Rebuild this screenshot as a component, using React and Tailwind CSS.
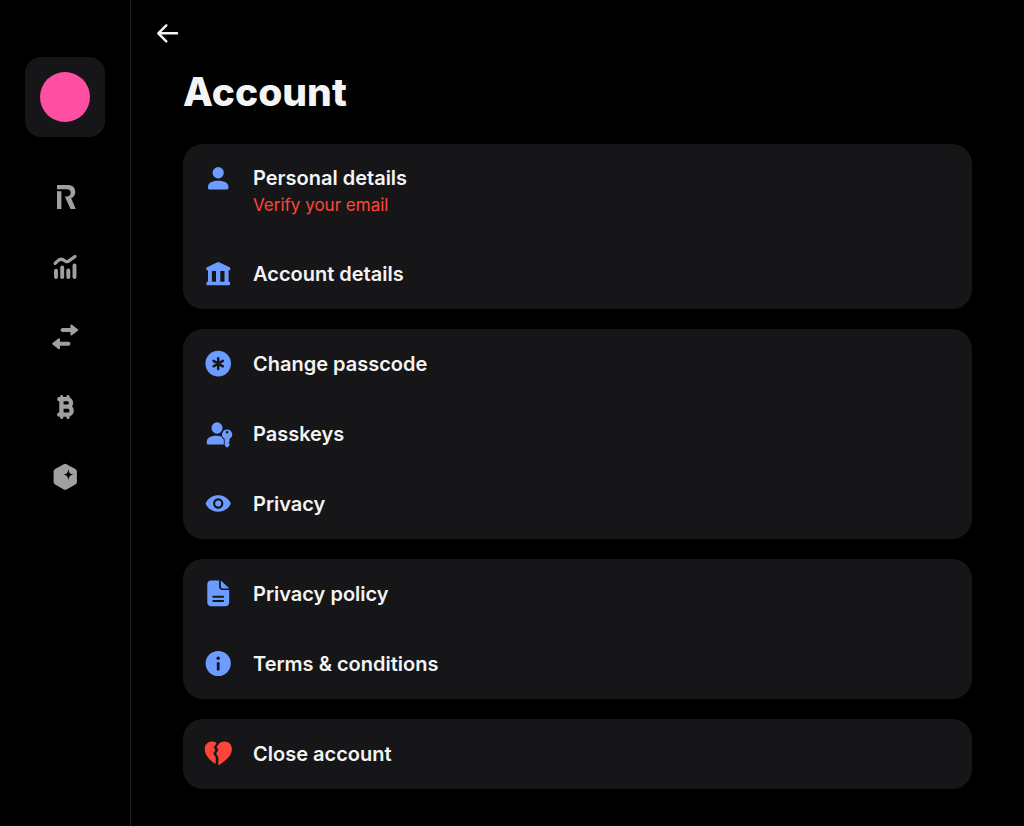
import React from "react";

const RetailIcon = () => (
  <svg viewBox="0 0 30 30" className="h-[30px] w-[30px]" fill="currentColor" aria-hidden="true">
    <path d="M7 9.200h4.400V27H7z" />
    <path d="M7 3h10.600c4.600 0 7.700 2.700 7.700 6.900 0 3-1.500 5.200-4.200 6.200l4.700 10.900h-5.300l-5.700-12.600h2.400c2.200 0 3.400-1.400 3.400-3.600s-1.300-3.500-3.600-3.500H7z" />
  </svg>
);

const InvestIcon = () => (
  <svg viewBox="0 0 30 30" className="h-[30px] w-[30px]" fill="none" stroke="currentColor" strokeLinecap="round" strokeLinejoin="round" aria-hidden="true">
    <path strokeWidth="3.900" d="M6 18.800v6.200M12.200 15.500v9.500M18.300 18.500v6.500M24.500 13.500v11.500" />
    <path strokeWidth="3.300" d="M5.200 11.300l3.200-2.900c1.500-1.400 3.300-1.500 4.900-.5l2 1.200c1.300.8 2.900.6 4-.4L25 4.500" />
  </svg>
);

const TransferIcon = () => (
  <svg viewBox="0 0 30 30" className="h-[30px] w-[30px]" fill="currentColor" stroke="currentColor" strokeLinecap="round" strokeLinejoin="round" aria-hidden="true">
    <path strokeWidth="4" d="M12.600 8H21M18.400 21.700H9" />
    <path strokeWidth="2" d="M21.400 3.500L27.200 8l-5.800 4.500zM9 17.200L3.200 21.700 9 26.200z" />
  </svg>
);

const CryptoIcon = () => (
  <svg viewBox="0 0 30 30" className="h-[30px] w-[30px]" fill="none" stroke="currentColor" strokeLinecap="round" strokeLinejoin="round" aria-hidden="true">
    <path strokeWidth="4.300" d="M9.200 7.200h8.100a3.600 3.600 0 0 1 0 7.500H11.800h5.900a4 4 0 0 1 0 8H9.200M11.400 7.200v15.500" />
    <path strokeWidth="3.200" d="M11.700 4.500v3M18 4.500v3M11.700 22.500v3M18 22.500v3" />
  </svg>
);

const HubIcon = () => (
  <svg viewBox="0 0 30 30" className="h-[30px] w-[30px]" fill="currentColor" aria-hidden="true">
    <path d="M13.700 2.200a3 3 0 0 1 2.900 0l8.700 4.700a3 3 0 0 1 1.600 2.700v10.300a3 3 0 0 1-1.600 2.700l-8.700 4.800a3 3 0 0 1-2.900 0l-8.500-4.800A3 3 0 0 1 3.600 19.900V9.600a3 3 0 0 1 1.600-2.700z" />
    <path className="fill-black" d="M18.400 6.900c.7 4.200 1.500 5 5.700 5.700-4.200.7-5 1.500-5.700 5.700-.7-4.200-1.500-5-5.700-5.700 4.200-.7 5-1.500 5.700-5.700z" />
  </svg>
);

const PersonIcon = () => (
  <svg viewBox="0 0 30 30" className="h-[30px] w-[30px]" fill="currentColor" aria-hidden="true">
    <ellipse cx="15.200" cy="8.800" rx="5.600" ry="5.700" />
    <path d="M5 22.700c0-3.700 3.800-6 10.200-6s10.200 2.300 10.200 6v1.400c0 .8-.5 1.300-1.300 1.300H6.300C5.500 25.400 5 24.900 5 24.100z" />
  </svg>
);

const BankIcon = () => (
  <svg viewBox="0 0 30 30" className="h-[30px] w-[30px]" fill="currentColor" aria-hidden="true">
    <path d="M14.400 3.300a1.800 1.800 0 0 1 1.700 0l10.500 5c.5.300.7.600.7 1.100v1c0 .5-.3.800-.8.800h-.9v11.500h.6c.5 0 .8.300.8.800v2c0 .5-.3.800-.8.800H4.300c-.5 0-.8-.3-.8-.8v-2c0-.5.300-.8.800-.8H5V11.200h-.9c-.5 0-.8-.3-.8-.8v-1c0-.5.200-.8.700-1.100zM8.900 11.900v10.800h4.100V11.900zM17.300 11.900v10.800h4.200V11.900z" />
  </svg>
);

const PasscodeIcon = () => (
  <svg viewBox="0 0 30 30" className="h-[30px] w-[30px]" aria-hidden="true">
    <circle cx="15.200" cy="14.600" r="12.800" fill="currentColor" />
    <path className="stroke-[#161618]" strokeWidth="2.500" strokeLinecap="round" d="M15.200 9.200v10.800M10.500 11.900l9.400 5.400M10.500 17.300l9.400-5.400" />
  </svg>
);

const PasskeyIcon = () => (
  <svg viewBox="0 0 30 30" className="h-[30px] w-[30px]" fill="currentColor" aria-hidden="true">
    <ellipse cx="14" cy="9" rx="5.500" ry="5.700" />
    <path d="M3.800 22.600c0-3.600 3.600-5.800 9.500-5.800 2 0 3.700.3 5.100.8.500 1.300 1.300 2.300 2.400 3v4.800H5c-.8 0-1.200-.5-1.200-1.200z" />
    <path fillRule="evenodd" d="M24.100 10.500a5.100 5.100 0 0 0-2.400 9.600v6.300l2.400 2.300 2.400-2.200v-1.800l-1-1 1-1.100v-2.500a5.100 5.100 0 0 0-2.400-9.600zm0 1.500a1.300 1.300 0 1 1 0 2.600 1.300 1.300 0 0 1 0-2.600z" />
  </svg>
);

const EyeIcon = () => (
  <svg viewBox="0 0 30 30" className="h-[30px] w-[30px]" fill="currentColor" aria-hidden="true">
    <path d="M15.200 6.200c5.300 0 9.700 2.700 12.200 7.300.4.700.4 1.300 0 2-2.500 4.600-6.900 7.300-12.200 7.300S5.500 20.100 3 15.500c-.4-.7-.4-1.300 0-2 2.500-4.600 6.900-7.300 12.200-7.300z" />
    <circle cx="15.200" cy="14.500" r="4.100" className="stroke-[#161618]" strokeWidth="2.200" />
  </svg>
);

const DocumentIcon = () => (
  <svg viewBox="0 0 30 30" className="h-[30px] w-[30px]" fill="currentColor" aria-hidden="true">
    <path d="M8.300 1.500h7.700v6c0 2.300 1.300 3.500 3.500 3.500h6.700v12.200c0 2.600-1.400 4-4 4H8.300c-2.600 0-4-1.400-4-4V5.500c0-2.600 1.400-4 4-4z" />
    <path d="M17.800 1.700c.5.100.8.400 1.100.7l6.400 6c.3.300.6.600.7 1h-6c-1.500 0-2.200-.7-2.200-2.100z" />
    <path className="stroke-[#161618]" strokeWidth="1.900" strokeLinecap="round" d="M10.200 17.700h10M10.200 22h10" />
  </svg>
);

const InfoIcon = () => (
  <svg viewBox="0 0 30 30" className="h-[30px] w-[30px]" aria-hidden="true">
    <circle cx="15.200" cy="14.500" r="12.600" fill="currentColor" />
    <circle cx="15.200" cy="9.200" r="1.700" className="fill-[#161618]" />
    <path className="stroke-[#161618]" strokeWidth="2.800" strokeLinecap="round" d="M15.200 14.300v6" />
  </svg>
);

const BrokenHeartIcon = () => (
  <svg viewBox="0 0 30 30" className="h-[30px] w-[30px]" fill="currentColor" aria-hidden="true">
    <path d="M13.600 4.200C12.400 3 11 2.400 9.200 2.400c-4.400 0-7.500 3.200-7.500 7.600 0 5.700 4.700 10.900 10.900 15.100l.3-6.400-2.600-4.200 2-3.300-1.500-3z" />
    <path d="M15.900 4.700c1.500-1.500 3.400-2.300 5.600-2.300 4.400 0 7.400 3.200 7.400 7.600 0 6.200-5.500 11.500-13.600 16.400l.1-8-2.300-3.900 2.300-3.400-1.800-3z" />
  </svg>
);

const BackIcon = () => (
  <svg viewBox="0 0 30 30" className="h-[30px] w-[30px]" fill="none" stroke="currentColor" strokeWidth="2.500" strokeLinecap="round" strokeLinejoin="round" aria-hidden="true">
    <path d="M25 15.300H6.500M14.300 7.300l-8 8 8 8" />
  </svg>
);

const navItems = [
  { label: "Home", icon: RetailIcon },
  { label: "Invest", icon: InvestIcon },
  { label: "Payments", icon: TransferIcon },
  { label: "Crypto", icon: CryptoIcon },
  { label: "Hub", icon: HubIcon },
];

const sections = [
  [
    { label: "Personal details", note: "Verify your email", icon: PersonIcon },
    { label: "Account details", icon: BankIcon },
  ],
  [
    { label: "Change passcode", icon: PasscodeIcon },
    { label: "Passkeys", icon: PasskeyIcon },
    { label: "Privacy", icon: EyeIcon },
  ],
  [
    { label: "Privacy policy", icon: DocumentIcon },
    { label: "Terms & conditions", icon: InfoIcon },
  ],
  [{ label: "Close account", icon: BrokenHeartIcon, danger: true }],
];

const Sidebar = () => {
  return (
    <aside className="flex w-[131px] shrink-0 flex-col items-center border-r border-[#212123] pt-[57px]">
      <button aria-label="Profile" className="flex h-20 w-20 items-center justify-center rounded-2xl bg-[#161618]">
        <span className="h-[50px] w-[50px] rounded-full bg-[#ff4fa3]"></span>
      </button>
      <nav className="mt-[25px] flex flex-col">
        {navItems.map((item) => (
          <a key={item.label} href="#" aria-label={item.label} className="flex h-[70px] w-20 items-center justify-center text-[#a0a0a2]">
            <item.icon />
          </a>
        ))}
      </nav>
    </aside>
  );
};

const Row = ({ item }) => {
  return (
    <a href="#" className={item.note ? "flex items-start gap-5 p-5" : "flex items-center gap-5 p-5"}>
      <span className={item.danger ? "shrink-0 text-[#ff453a]" : "shrink-0 text-[#6c9cff]"}>
        <item.icon />
      </span>
      <span className="flex flex-col">
        <span className="text-[20px] leading-7 font-semibold text-[#f4f4f4]">{item.label}</span>
        {item.note ? <span className="text-[17px] leading-[27px] text-[#ff453a]">{item.note}</span> : null}
      </span>
    </a>
  );
};

export default function App() {
  return (
    <div className="flex min-h-screen bg-black font-['Inter',sans-serif]">
      <Sidebar />
      <main className="min-w-0 flex-1 pt-[18px] pb-9">
        <button aria-label="Back" className="ml-[21px] block text-[#f4f4f4]">
          <BackIcon />
        </button>
        <div className="px-[52px]">
          <h1 className="mt-5 mb-7 text-[39px] leading-[48px] font-extrabold text-[#f4f4f4]">Account</h1>
          <div className="flex flex-col gap-5">
            {sections.map((rows, i) => (
              <section key={i} className="rounded-[20px] bg-[#161618]">
                {rows.map((item) => (
                  <Row key={item.label} item={item} />
                ))}
              </section>
            ))}
          </div>
        </div>
      </main>
    </div>
  );
}
